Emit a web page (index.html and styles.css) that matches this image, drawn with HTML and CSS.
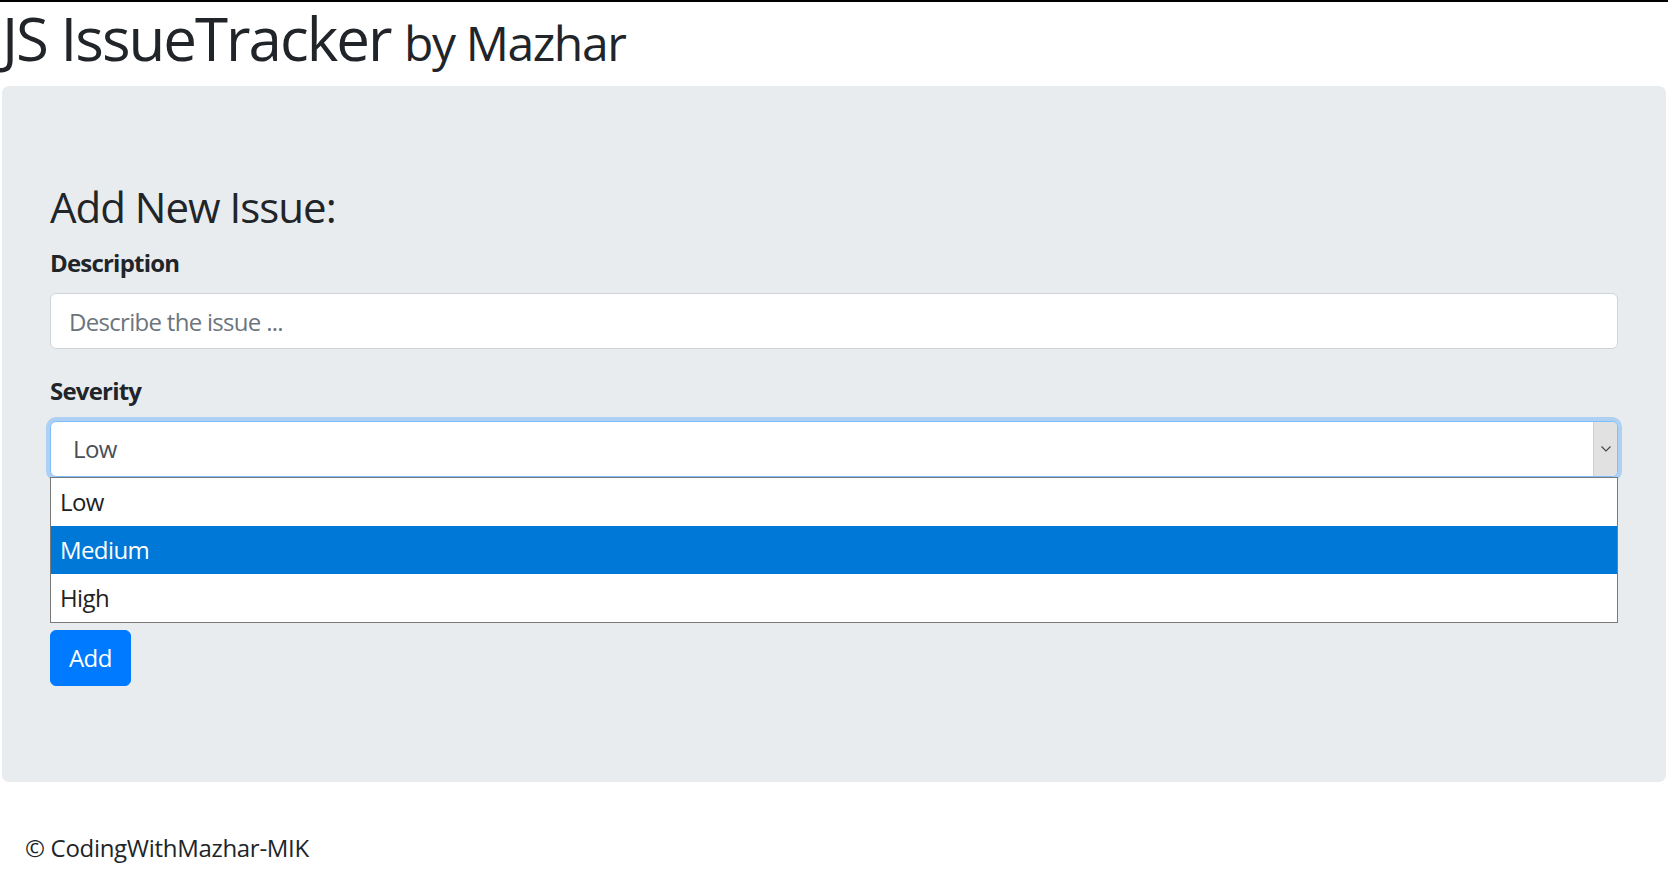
FILE: index.html
```html
<!DOCTYPE html>
<html lang="en">
<head>
<meta charset="utf-8">
<title>JS IssueTracker</title>
<link rel="stylesheet" href="styles.css">
</head>
<body>
<div class="page">
  <h1 class="title">JS IssueTracker <small class="title-small">by Mazhar</small></h1>
  <div class="jumbotron">
    <h3 class="form-title">Add New Issue:</h3>
    <form class="issue-form">
      <div class="form-group">
        <label class="label" for="desc">Description</label>
        <input id="desc" class="form-control" type="text" placeholder="Describe the issue ...">
      </div>
      <div class="form-group select-group">
        <label class="label">Severity</label>
        <div class="select-box">
          <span class="select-value">Low</span>
          <span class="select-arrow">
            <svg width="10" height="6" viewBox="0 0 10 6"><polyline points="0.5,0.5 5,5 9.5,0.5" fill="none" stroke="#444" stroke-width="1.1"/></svg>
          </span>
        </div>
        <ul class="select-popup">
          <li class="option">Low</li>
          <li class="option option-active">Medium</li>
          <li class="option">High</li>
        </ul>
      </div>
      <button class="btn" type="button">Add</button>
    </form>
  </div>
  <div class="issues-list"></div>
  <footer class="footer">© CodingWithMazhar-MIK</footer>
</div>
</body>
</html>
```

FILE: styles.css
```css
* { box-sizing: border-box; }

html, body {
  margin: 0;
  padding: 0;
  background: #fff;
}

body {
  border-top: 2px solid #000;
  font-family: "Open Sans", "Noto Sans", sans-serif;
  color: #212529;
  font-size: 24px;
  line-height: 36px;
  letter-spacing: -0.6px;
}

.page {
  padding: 0 2px;
}

.title {
  margin: 0 0 12px;
  height: 72px;
  font-size: 60px;
  line-height: 72px;
  font-weight: 400;
  letter-spacing: -2px;
  color: #212529;
}

.title-small {
  font-size: 48px;
  line-height: 1;
  font-weight: 400;
  letter-spacing: -1.4px;
}

.jumbotron {
  background: #e9ecef;
  border-radius: 7px;
  padding: 96px 48px;
  margin-bottom: 48px;
}

.form-title {
  margin: 0 0 13px;
  font-size: 42px;
  line-height: 50px;
  font-weight: 400;
  letter-spacing: -1px;
}

.issue-form {
  margin: 0;
}

.form-group {
  margin-bottom: 24px;
}

.select-group {
  margin-bottom: 7px;
}

.label {
  display: block;
  font-weight: 700;
  font-size: 24px;
  line-height: 36px;
  margin-bottom: 12px;
  letter-spacing: -0.8px;
}

.form-control {
  display: block;
  width: 100%;
  height: 56px;
  padding: 0 18px;
  border: 1px solid #ced4da;
  border-radius: 6px;
  background: #fff;
  font-family: inherit;
  font-size: 24px;
  letter-spacing: -0.7px;
  color: #495057;
  outline: none;
}

.form-control::placeholder {
  color: #6c757d;
  opacity: 1;
}

.select-box {
  display: flex;
  align-items: stretch;
  height: 56px;
  border: 1px solid #80bdff;
  border-radius: 6px;
  background: #fff;
  box-shadow: 0 0 0 4px rgba(0, 123, 255, 0.25);
  overflow: hidden;
}

.select-value {
  flex: 1;
  display: flex;
  align-items: center;
  padding-left: 22px;
  color: #495057;
}

.select-arrow {
  width: 24px;
  display: flex;
  align-items: center;
  justify-content: center;
  background: #e1e1e1;
  border-left: 1px solid #cfcfcf;
}

.select-popup {
  margin: 0;
  padding: 0;
  list-style: none;
  background: #fff;
  border: 1px solid #7a7a7a;
}

.option {
  height: 48px;
  line-height: 48px;
  padding-left: 9px;
  color: #222;
}

.option-active {
  background: #0078d7;
  color: #fff;
}

.btn {
  display: inline-block;
  height: 56px;
  padding: 0 18px;
  border: 1px solid #007bff;
  border-radius: 6px;
  background: #007bff;
  color: #fff;
  font-family: inherit;
  font-size: 24px;
  line-height: 36px;
  letter-spacing: -0.6px;
}

.footer {
  padding-left: 23px;
  font-size: 24px;
  line-height: 36px;
  letter-spacing: -0.3px;
}
```
